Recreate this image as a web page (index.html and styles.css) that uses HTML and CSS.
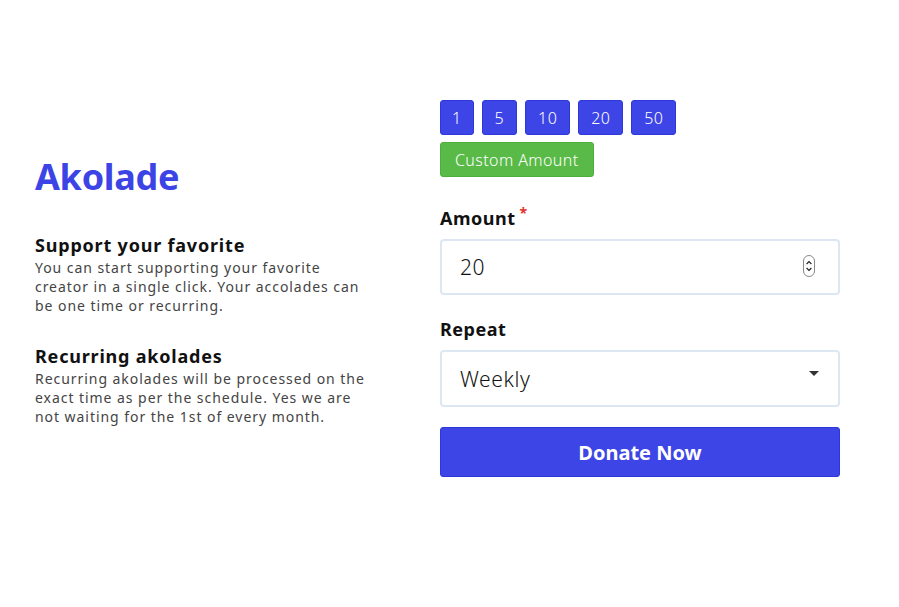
FILE: index.html
```html
<!DOCTYPE html>
<html lang="en">
<head>
<meta charset="utf-8">
<title>Akolade</title>
<link rel="stylesheet" href="styles.css">
</head>
<body>
<main class="page">
  <section class="intro">
    <h1 class="brand">Akolade</h1>
    <div class="feature">
      <h2>Support your favorite</h2>
      <p>You can start supporting your favorite creator in a single click. Your accolades can be one time or recurring.</p>
    </div>
    <div class="feature">
      <h2>Recurring akolades</h2>
      <p>Recurring akolades will be processed on the exact time as per the schedule. Yes we are not waiting for the 1st of every month.</p>
    </div>
  </section>
  <form class="donate">
    <div class="presets">
      <button type="button" class="chip">1</button>
      <button type="button" class="chip">5</button>
      <button type="button" class="chip">10</button>
      <button type="button" class="chip">20</button>
      <button type="button" class="chip">50</button>
    </div>
    <button type="button" class="chip custom">Custom Amount</button>
    <label class="label amount-label">Amount<span class="req">*</span></label>
    <div class="input-wrap">
      <input class="field" type="number" value="20">
      <svg class="spinner" width="12" height="22" viewBox="0 0 12 22" aria-hidden="true">
        <rect x="0.5" y="0.5" width="11" height="21" rx="5.5" fill="#fff" stroke="#8a8a8a"/>
        <path d="M3.6 9 L6 6.6 L8.4 9" fill="none" stroke="#222" stroke-width="1.2"/>
        <path d="M3.6 13 L6 15.4 L8.4 13" fill="none" stroke="#222" stroke-width="1.2"/>
      </svg>
    </div>
    <label class="label repeat-label">Repeat</label>
    <div class="select-wrap">
      <select class="field">
        <option>Weekly</option>
        <option>Monthly</option>
        <option>Once</option>
      </select>
    </div>
    <button type="button" class="submit">Donate Now</button>
  </form>
</main>
</body>
</html>
```
FILE: styles.css
```css
* { box-sizing: border-box; }
html, body { margin: 0; padding: 0; background: #fff; }
body {
  font-family: "Noto Sans", "Open Sans", sans-serif;
  color: #111;
}
.page {
  display: flex;
  padding: 100px 0 0 35px;
}
.intro {
  width: 405px;
  padding-top: 52px;
}
.brand {
  margin: 0;
  font-size: 36px;
  line-height: 50px;
  font-weight: 700;
  color: #3d44e6;
  letter-spacing: -0.3px;
}
.feature { margin-top: 32px; width: 335px; }
.feature + .feature { margin-top: 30px; }
.feature h2 {
  margin: 0;
  font-size: 18px;
  line-height: 22px;
  font-weight: 700;
  color: #111;
  letter-spacing: 0.8px;
}
.feature p {
  margin: 2px 0 0;
  font-size: 14px;
  line-height: 19px;
  color: #444;
  letter-spacing: 0.95px;
}
.donate {
  width: 400px;
  display: flex;
  flex-direction: column;
  align-items: flex-start;
}
.presets { display: flex; gap: 8px; }
.chip {
  height: 35px;
  padding: 0 12px;
  border: 1px solid #2d38d8;
  border-radius: 3px;
  background: #3e45e6;
  color: #fff;
  font-family: inherit;
  font-size: 16px;
  font-weight: 300;
  letter-spacing: 0.4px;
}
.presets .chip:first-child { padding: 0 11px; }
.custom {
  margin-top: 7px;
  background: #59ba47;
  border-color: #4daf3b;
  padding: 0 14px;
}
.label {
  font-size: 18px;
  font-weight: 700;
  line-height: 24px;
  letter-spacing: 0.5px;
}
.amount-label { margin-top: 29px; }
.req {
  color: #e0342a;
  font-size: 14px;
  vertical-align: top;
  margin-left: 4px;
  line-height: 14px;
}
.input-wrap {
  position: relative;
  margin-top: 9px;
}
.field {
  display: block;
  width: 400px;
  height: 56px;
  border: 2px solid #dce7f3;
  border-radius: 4px;
  background: #fff;
  padding: 0 40px 0 18px;
  font-family: inherit;
  font-size: 21px;
  font-weight: 300;
  color: #111;
  letter-spacing: 0.6px;
}
.field:focus { outline: none; }
input.field { -moz-appearance: textfield; }
input.field::-webkit-inner-spin-button,
input.field::-webkit-outer-spin-button { -webkit-appearance: none; margin: 0; }
.spinner {
  position: absolute;
  right: 25px;
  top: 16px;
  pointer-events: none;
}
.repeat-label { margin-top: 22px; }
.select-wrap {
  position: relative;
  margin-top: 9px;
}
.select-wrap .field {
  appearance: none;
  -webkit-appearance: none;
  height: 57px;
}
.select-wrap::after {
  content: "";
  position: absolute;
  right: 21px;
  top: 21px;
  border-left: 5px solid transparent;
  border-right: 5px solid transparent;
  border-top: 5px solid #333;
  pointer-events: none;
}
.submit {
  margin-top: 20px;
  width: 400px;
  height: 50px;
  background: #3e45e6;
  border: 1px solid #2d38d8;
  border-radius: 3px;
  color: #fff;
  font-family: inherit;
  font-size: 20px;
  font-weight: 700;
}
```
